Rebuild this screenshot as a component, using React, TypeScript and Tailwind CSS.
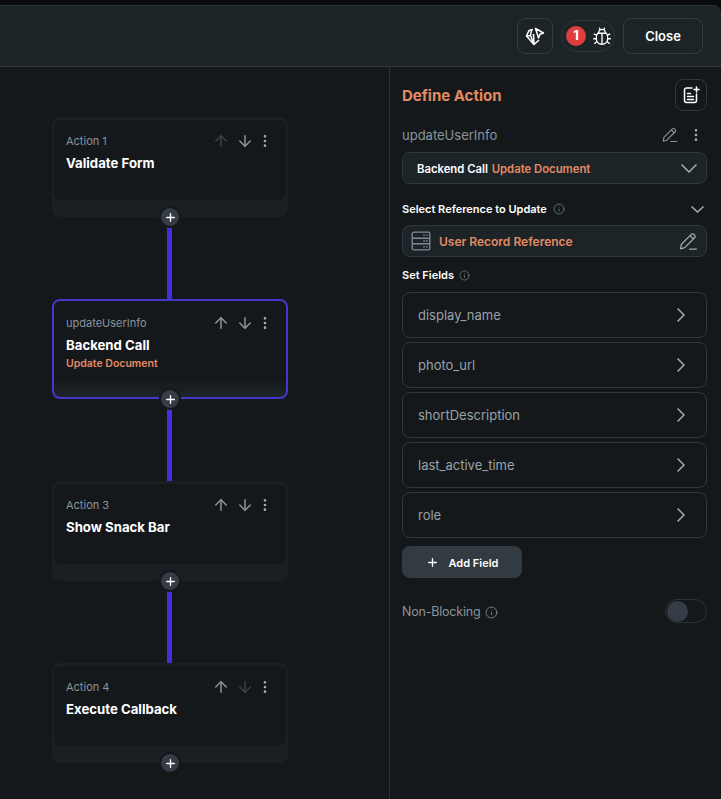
import { ArrowDown, ArrowUp, EllipsisVertical, Info, Plus } from 'lucide-react';

const FONT = "font-['Inter','Liberation_Sans',sans-serif]";

const ACTIONS = [
  { label: 'Action 1', title: 'Validate Form', upOff: true },
  { label: 'updateUserInfo', title: 'Backend Call', sub: 'Update Document', active: true },
  { label: 'Action 3', title: 'Show Snack Bar' },
  { label: 'Action 4', title: 'Execute Callback', downOff: true },
];

const FIELDS = ['display_name', 'photo_url', 'shortDescription', 'last_active_time', 'role'];

function EditIcon({ className }: { className?: string }) {
  return (
    <svg viewBox="0 0 20 20" fill="none" stroke="currentColor" strokeWidth="1.2" className={className}>
      <path d="M2.5 17 3.200 12.600 12.600 3.200a1.600 1.600 0 0 1 2.300 0l.9.9a1.600 1.600 0 0 1 0 2.300L6.400 15.800Z" strokeLinejoin="round" />
      <path d="M11.400 4.400 14.600 7.600M10.500 17.300H18" />
    </svg>
  );
}

function Chevron({ w, h, down, className }: { w: number; h: number; down?: boolean; className?: string }) {
  return (
    <svg width={w} height={h} viewBox={`0 0 ${w} ${h}`} fill="none" stroke="currentColor" strokeWidth="1.5" className={className}>
      <path d={down ? `M.5 .5 ${w / 2} ${h - 1} ${w - 0.5} .5` : `M.5 .5 ${w - 1} ${h / 2} .5 ${h - 0.5}`} />
    </svg>
  );
}

function ActionCard({ label, title, sub, active, upOff, downOff }: {
  label: string;
  title: string;
  sub?: string;
  active?: boolean;
  upOff?: boolean;
  downOff?: boolean;
}) {
  return (
    <div className="relative w-[236px]">
      <div className={`h-[100px] rounded-lg ${active ? 'border-2 border-[#4338c9] bg-gradient-to-b from-[#14181b] from-[80%] to-[#1e2428]' : 'border-2 border-[#1a1f23] bg-[#1a1f23]'}`}>
        <div className={`mt-[1px] h-[80px] rounded-lg pl-3 pr-[13px] pt-[11px] ${active ? '' : 'bg-[#14181b]'}`}>
          <div className="flex h-5 items-center justify-between">
            <span className="text-[11px] text-[#8b949c]">{label}</span>
            <div className="flex items-center text-[#8b949c]">
              <ArrowUp size={18} className={upOff ? 'mr-[6px] text-[#3a4046]' : 'mr-[6px]'} />
              <ArrowDown size={18} className={downOff ? 'mr-[3px] text-[#3a4046]' : 'mr-[3px]'} />
              <EllipsisVertical size={16} className="text-[#a5abb0]" />
            </div>
          </div>
          <div className="mt-[3px] text-[13.200px] font-bold leading-[19px] text-white">{title}</div>
          {sub && <div className="mt-[1px] text-[10.500px] font-semibold leading-[15px] text-[#e38a62]">{sub}</div>}
        </div>
      </div>
      <div className="absolute bottom-[-11px] left-[107px] flex h-[22px] w-[22px] items-center justify-center rounded-full border-2 border-[#14181b] bg-[#353c45] text-white">
        <Plus size={13} strokeWidth={2.5} />
      </div>
    </div>
  );
}

export default function App() {
  return (
    <div className={`h-[799px] w-[721px] overflow-hidden bg-[#0b0c0d] pt-[5px] ${FONT}`}>
      <div className="h-full overflow-hidden rounded-tr-lg border-t border-[#2b3238] bg-[#14181b]">
        <header className="flex h-[61px] items-center justify-end border-b border-[#30373d] bg-[#1d2428] pr-[18px]">
          <button className="flex h-9 w-9 items-center justify-center rounded-lg border border-[#353c44] text-white">
            <svg viewBox="0 0 22 22" width="22" height="22" fill="none" stroke="currentColor" strokeWidth="1.5" strokeLinejoin="round">
              <path d="M9 4.500 5 5.500 2.500 11 10 19.500l5-4.500" />
              <path d="M2.500 11 6.500 10.500 10 19.500M6.500 10.500 7.500 5M10 19.500 9.500 9" />
              <path d="M11.500 3.500 19.500 8 16 9.200 14.500 13Z" />
            </svg>
          </button>
          <div className="ml-2 flex h-8 w-[54px] items-center rounded-full border border-[#2e353b] pl-1">
            <span className="flex h-5 w-5 items-center justify-center rounded-full bg-[#e03e3e] text-[13px] font-bold text-white">1</span>
            <svg viewBox="0 0 20 20" width="22" height="22" fill="none" stroke="white" strokeWidth="1.2" className="ml-[5px]">
              <path d="M6 7.500h8c1 1.500 1.200 3 1.200 4.500 0 3-2 5.500-5.200 5.500S4.800 15 4.800 12c0-1.500.2-3 1.200-4.500Z" />
              <path d="M10 7.500V17.500M7 7.500C7 5 8.300 4 10 4s3 1 3 3.500M7.500 2.500l1 2M12.500 2.500l-1 2M2.500 8l3 1.500M17.500 8l-3 1.500M2 12.500h3M15 12.500h3M3 17l2.500-2M17 17l-2.500-2" />
            </svg>
          </div>
          <button className="ml-[8px] h-[36px] w-20 rounded-lg border border-[#353c44] pt-[1px] text-[13px] font-semibold text-white">Close</button>
        </header>

        <div className="flex h-[732px]">
          <div className="flex w-[389px] flex-col pl-[52px] pt-[50px]">
            {ACTIONS.map((action, i) => (
              <div key={action.title}>
                {i > 0 && <div className="ml-[115px] mt-[1px] h-[81px] w-[5px] bg-[#4030e0]" />}
                <ActionCard {...action} />
              </div>
            ))}
          </div>

          <aside className="w-[332px] border-l border-[#2b3238] pl-3 pr-[14px] pt-3">
            <div className="flex items-center justify-between">
              <h2 className="pt-[2px] text-[15px] font-bold text-[#e38a62]">Define Action</h2>
              <button className="flex h-8 w-8 items-center justify-center rounded-lg border border-[#30373d] text-white">
                <svg viewBox="0 0 20 20" width="20" height="20" fill="none" stroke="currentColor" strokeWidth="1.500" strokeLinecap="round">
                  <path d="M11 3H5.500A2 2 0 0 0 3.500 5v10.500a2 2 0 0 0 2 2h8a2 2 0 0 0 2-2V9" />
                  <path d="M6.500 8.500h3M6.500 11.500h6M6.500 14.500h6M15.500 2v5M13 4.500h5" />
                </svg>
              </button>
            </div>

            <div className="mt-[14px] flex h-5 items-center justify-between text-[#8b949c]">
              <span className="pt-[2px] text-[13px]">updateUserInfo</span>
              <div className="flex items-center">
                <EditIcon className="h-[18px] w-[18px]" />
                <EllipsisVertical size={16} className="ml-[9px] mr-[3px] text-[#a5abb0]" />
              </div>
            </div>

            <div className="mt-[7px] flex h-8 items-center justify-between rounded-lg border border-[#30373d] bg-[#1d2428] pl-[14px] pr-[9px] text-[11.300px] font-semibold">
              <span className="pt-[2px] text-white">
                Backend Call <span className="ml-[1px] text-[#e38a62]">Update Document</span>
              </span>
              <Chevron w={16} h={9} down className="text-[#a5abb0]" />
            </div>

            <div className="mt-[16px] flex h-[18px] items-center justify-between pr-[3px] text-[11px] font-semibold text-white">
              <span className="flex items-center">
                Select Reference to Update
                <Info size={12} strokeWidth={1.5} className="ml-[6px] text-[#7b838a]" />
              </span>
              <Chevron w={13} h={7} down className="text-[#a5abb0]" />
            </div>

            <div className="mt-[7px] flex h-8 items-center justify-between rounded-lg border border-[#30373d] bg-[#1d2428] pl-[7px] pr-[7px]">
              <span className="flex items-center text-[12px] font-semibold text-[#e38a62]">
                <svg viewBox="0 0 20 20" width="22" height="22" fill="none" stroke="#7f8a94" strokeWidth="1.200" className="mr-[7px]">
                  <rect x="2" y="2" width="16" height="16" rx="1.500" />
                  <path d="M2 7.500h16M2 12.500h16M12 4.700h1.500M14.500 4.700h1.500M12 10h1.500M14.500 10h1.500M12 15.300h1.500M14.500 15.300h1.500" />
                </svg>
                <span className="pt-[2px]">User Record Reference</span>
              </span>
              <EditIcon className="h-[21px] w-[21px] text-[#a5abb0]" />
            </div>

            <div className="mt-[10px] flex h-[17px] items-center text-[11px] font-semibold text-white">
              Set Fields
              <Info size={11} strokeWidth={1.5} className="ml-[5px] text-[#7b838a]" />
            </div>

            <div className="mt-2 flex flex-col gap-1">
              {FIELDS.map(field => (
                <div key={field} className="flex h-[46px] items-center justify-between rounded-lg border border-[#30373d] pl-[15px] pr-[21px] text-[13px] text-[#9aa2a9]">
                  <span className="pt-[2px]">{field}</span>
                  <Chevron w={8} h={14} className="text-[#a5abb0]" />
                </div>
              ))}
            </div>

            <button className="mt-2 flex h-8 w-[120px] items-center justify-center rounded-lg bg-[#323a42] text-[11px] font-semibold text-white">
              <Plus size={13} strokeWidth={2.5} className="mr-[10px]" />
              <span className="pt-[2px]">Add Field</span>
            </button>

            <div className="mt-[21px] flex h-6 items-center justify-between">
              <span className="flex items-center pt-[2px] text-[12.500px] tracking-[-0.2px] text-[#8b949c]">
                Non-Blocking
                <Info size={13} strokeWidth={1.5} className="ml-[5px]" />
              </span>
              <div className="flex h-6 w-[42px] items-center rounded-full border border-[#2b3238] pl-[1px]">
                <span className="h-[21px] w-[21px] rounded-full bg-[#353c45]" />
              </div>
            </div>
          </aside>
        </div>
      </div>
    </div>
  );
}
